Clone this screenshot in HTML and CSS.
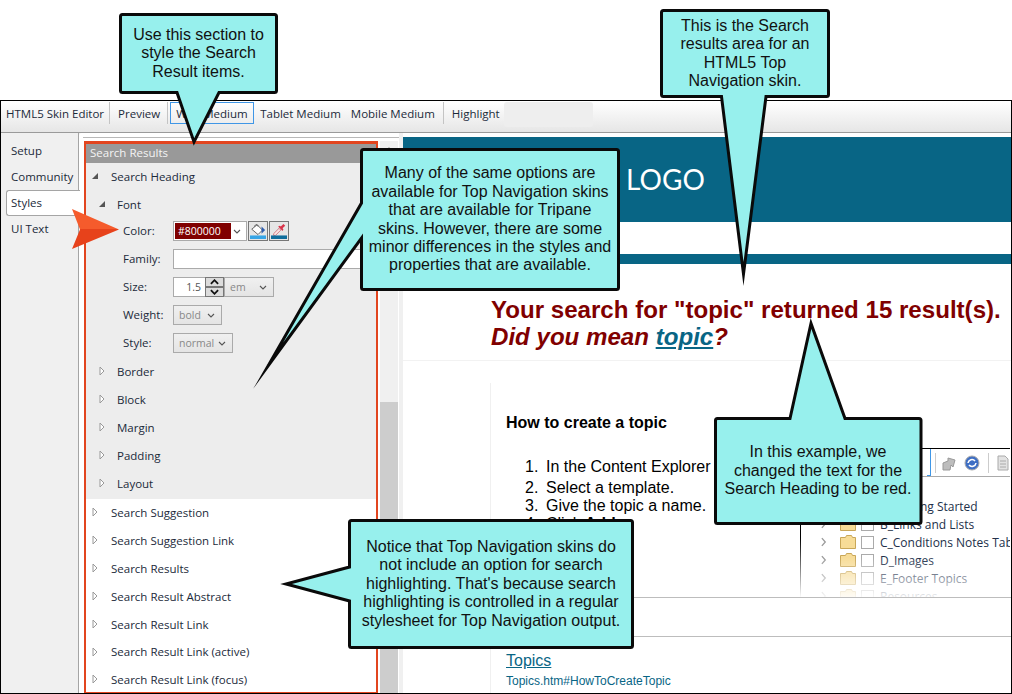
FILE: index.html
```html
<!DOCTYPE html>
<html lang="en">
<head>
<meta charset="utf-8">
<title>HTML5 Skin Editor</title>
<link rel="stylesheet" href="styles.css">
</head>
<body>
<div class="page">
  <div class="window">
    <nav class="toolbar">
      <span class="tool sep">HTML5 Skin Editor</span>
      <span class="tool sep sep-mid">Preview</span>
      <span class="tool selected">Web Medium</span>
      <span class="tool">Tablet Medium</span>
      <span class="tool sep sep-wide">Mobile Medium</span>
      <span class="tool">Highlight</span>
      <span class="tool-blank"></span>
    </nav>
    <div class="workspace">
      <aside class="tabs">
        <div class="tab">Setup</div>
        <div class="tab">Community</div>
        <div class="tab active">Styles</div>
        <div class="tab">UI Text</div>
      </aside>
      <section class="panel">
        <div class="listbox">
          <div class="redbox">
            <div class="group-title">Search Results</div>
            <div class="group-open">
              <div class="row lvl1"><svg class="tri" viewBox="0 0 8 8"><path d="M7 1v6H1z" class="tri-open"/></svg>Search Heading</div>
              <div class="row lvl2 font-row"><svg class="tri" viewBox="0 0 8 8"><path d="M7 1v6H1z" class="tri-open"/></svg>Font</div>
              <div class="row prop"><label>Color:</label>
                <div class="color-field"><span class="swatch">#800000</span><svg class="chev" viewBox="0 0 8 5"><path d="M1 1l3 3 3-3"/></svg></div>
                <span class="iconbtn"><svg viewBox="0 0 18 18"><path d="M2 7l6-5 6 6-5 5z" fill="#fff" stroke="#555"/><path d="M5 4c1-3 4-3 4 0" fill="none" stroke="#555"/><path d="M13 4l4 4-4 4z" fill="#2f5fb0"/><rect x="0" y="14" width="18" height="4" fill="#37a5e6"/></svg></span>
                <span class="iconbtn"><svg viewBox="0 0 18 18"><path d="M3 12l6-6 2 2-6 6H3z" fill="#fbe4e4" stroke="#c9707a"/><path d="M8 4l5 5 1-2-1-1 3-3-2-2-3 3-1-1z" fill="#d8344a"/><rect x="0" y="14" width="18" height="4" fill="#0f6d9c"/></svg></span>
              </div>
              <div class="row prop"><label>Family:</label><div class="text-field"></div></div>
              <div class="row prop"><label>Size:</label>
                <div class="num-field">1.5</div>
                <div class="spinner"><span class="spin"><svg viewBox="0 0 10 6"><path d="M1 5l4-4 4 4" /></svg></span><span class="spin"><svg viewBox="0 0 10 6"><path d="M1 1l4 4 4-4" /></svg></span></div>
                <div class="select sel-em">em<svg class="chev" viewBox="0 0 8 5"><path d="M1 1l3 3 3-3"/></svg></div>
              </div>
              <div class="row prop"><label>Weight:</label><div class="select sel-weight">bold<svg class="chev" viewBox="0 0 8 5"><path d="M1 1l3 3 3-3"/></svg></div></div>
              <div class="row prop"><label>Style:</label><div class="select sel-style">normal<svg class="chev" viewBox="0 0 8 5"><path d="M1 1l3 3 3-3"/></svg></div></div>
              <div class="row lvl2"><svg class="tri" viewBox="0 0 8 10"><path d="M2 1l4 4-4 4z" class="tri-closed"/></svg>Border</div>
              <div class="row lvl2"><svg class="tri" viewBox="0 0 8 10"><path d="M2 1l4 4-4 4z" class="tri-closed"/></svg>Block</div>
              <div class="row lvl2"><svg class="tri" viewBox="0 0 8 10"><path d="M2 1l4 4-4 4z" class="tri-closed"/></svg>Margin</div>
              <div class="row lvl2"><svg class="tri" viewBox="0 0 8 10"><path d="M2 1l4 4-4 4z" class="tri-closed"/></svg>Padding</div>
              <div class="row lvl2"><svg class="tri" viewBox="0 0 8 10"><path d="M2 1l4 4-4 4z" class="tri-closed"/></svg>Layout</div>
            </div>
            <div class="row lvl1"><svg class="tri" viewBox="0 0 8 10"><path d="M2 1l4 4-4 4z" class="tri-closed"/></svg>Search Suggestion</div>
            <div class="row lvl1"><svg class="tri" viewBox="0 0 8 10"><path d="M2 1l4 4-4 4z" class="tri-closed"/></svg>Search Suggestion Link</div>
            <div class="row lvl1"><svg class="tri" viewBox="0 0 8 10"><path d="M2 1l4 4-4 4z" class="tri-closed"/></svg>Search Results</div>
            <div class="row lvl1"><svg class="tri" viewBox="0 0 8 10"><path d="M2 1l4 4-4 4z" class="tri-closed"/></svg>Search Result Abstract</div>
            <div class="row lvl1"><svg class="tri" viewBox="0 0 8 10"><path d="M2 1l4 4-4 4z" class="tri-closed"/></svg>Search Result Link</div>
            <div class="row lvl1 tight"><svg class="tri" viewBox="0 0 8 10"><path d="M2 1l4 4-4 4z" class="tri-closed"/></svg>Search Result Link (active)</div>
            <div class="row lvl1"><svg class="tri" viewBox="0 0 8 10"><path d="M2 1l4 4-4 4z" class="tri-closed"/></svg>Search Result Link (focus)</div>
          </div>
          <div class="scrollbar">
            <svg class="scroll-up" viewBox="0 0 10 6"><path d="M1 5l4-4 4 4"/></svg>
            <div class="scroll-thumb"></div>
          </div>
        </div>
      </section>
      <main class="preview">
        <header class="brand"><span class="logo">LOGO</span></header>
        <div class="nav-blank"></div>
        <div class="nav-rule"></div>
        <div class="results">
          <h1 class="search-heading">Your search for "topic" returned 15 result(s).<br><em>Did you mean <a href="#">topic</a>?</em></h1>
          <div class="result">
            <h2>How to create a topic</h2>
            <ol>
              <li>In the Content Explorer</li>
              <li>Select a template.</li>
              <li>Give the topic a name.</li>
              <li>Click <b>Add</b>.</li>
            </ol>
          </div>
          <div class="result-gap"></div>
          <div class="result-link">
            <a href="#" class="result-title">Topics</a>
            <div class="result-url">Topics.htm#HowToCreateTopic</div>
          </div>
        </div>
        <div class="shot">
          <div class="shot-bar">
            <span class="shot-sel"></span>
            <span class="shot-sep"></span>
            <svg class="shot-icon" viewBox="0 0 16 16"><path d="M2 15V8l5-2V3l7 2-2 7-2-2-1 5z" fill="#bdbdbd" stroke="#999"/></svg>
            <svg class="shot-icon" viewBox="0 0 16 16"><circle cx="8" cy="8" r="7" fill="#3f6fc4" stroke="#aaa"/><path d="M4 8a4 4 0 0 1 7-2M12 8a4 4 0 0 1-7 2" fill="none" stroke="#fff" stroke-width="1.6"/></svg>
            <span class="shot-sep"></span>
            <svg class="shot-icon" viewBox="0 0 16 16"><path d="M3 1h7l3 3v11H3z" fill="#e3e3e3" stroke="#aaa"/><path d="M5 6h6M5 9h6M5 12h6" stroke="#aaa"/></svg>
          </div>
          <div class="tree">
            <div class="tree-row"><svg class="tree-chev" viewBox="0 0 7 11"><path d="M1 1l4 4.500-4 4.500"/></svg><svg class="folder" viewBox="0 0 16 14"><path d="M.5 2.500h5l1-2h5l1 2h3v11H.5z" fill="#f7dc97" stroke="#c9a758"/></svg><span class="check"></span><span>A_Getting Started</span></div>
            <div class="tree-row"><svg class="tree-chev" viewBox="0 0 7 11"><path d="M1 1l4 4.500-4 4.500"/></svg><svg class="folder" viewBox="0 0 16 14"><path d="M.5 2.500h5l1-2h5l1 2h3v11H.5z" fill="#f7dc97" stroke="#c9a758"/></svg><span class="check"></span><span>B_Links and Lists</span></div>
            <div class="tree-row"><svg class="tree-chev" viewBox="0 0 7 11"><path d="M1 1l4 4.500-4 4.500"/></svg><svg class="folder" viewBox="0 0 16 14"><path d="M.5 2.500h5l1-2h5l1 2h3v11H.5z" fill="#f7dc97" stroke="#c9a758"/></svg><span class="check"></span><span>C_Conditions Notes Tables</span></div>
            <div class="tree-row"><svg class="tree-chev" viewBox="0 0 7 11"><path d="M1 1l4 4.500-4 4.500"/></svg><svg class="folder" viewBox="0 0 16 14"><path d="M.5 2.500h5l1-2h5l1 2h3v11H.5z" fill="#f7dc97" stroke="#c9a758"/></svg><span class="check"></span><span>D_Images</span></div>
            <div class="tree-row"><svg class="tree-chev" viewBox="0 0 7 11"><path d="M1 1l4 4.500-4 4.500"/></svg><svg class="folder" viewBox="0 0 16 14"><path d="M.5 2.500h5l1-2h5l1 2h3v11H.5z" fill="#f7dc97" stroke="#c9a758"/></svg><span class="check"></span><span>E_Footer Topics</span></div>
            <div class="tree-row"><svg class="tree-chev" viewBox="0 0 7 11"><path d="M1 1l4 4.500-4 4.500"/></svg><svg class="folder" viewBox="0 0 16 14"><path d="M.5 2.500h5l1-2h5l1 2h3v11H.5z" fill="#f7dc97" stroke="#c9a758"/></svg><span class="check"></span><span>Resources</span></div>
          </div>
          <div class="shot-fade"></div>
        </div>
      </main>
    </div>
  </div>

  <svg class="shapes" viewBox="0 0 1012 694">
    <defs>
      <linearGradient id="arrowFill" x1="0" y1="0" x2="0" y2="1">
        <stop offset="0.5" stop-color="#f55b2c"/>
        <stop offset="0.5" stop-color="#e7421b"/>
      </linearGradient>
    </defs>
    <path class="arrow" d="M72 209L119 229.500L72 249L80 229.500Z"/>
    <path class="bubble" d="M122.500 14.500H274.500Q276.500 14.500 276.500 16.500V90.500Q276.500 92.500 274.500 92.500H219L194 142L177 92.500H122.500Q120.500 92.500 120.500 90.500V16.500Q120.500 14.500 122.500 14.500Z"/>
    <path class="bubble" d="M663.500 10.500H826.500Q828.500 10.500 828.500 12.500V94.500Q828.500 96.500 826.500 96.500H766L743.500 274L721.500 96.500H663.500Q661.500 96.500 661.500 94.500V12.500Q661.500 10.500 663.500 10.500Z"/>
    <path class="bubble" d="M363.500 149.500H616.500Q618.500 149.500 618.500 151.500V287.500Q618.500 289.500 616.500 289.500H363.500Q361.500 289.500 361.500 287.500V238L268 366L361.500 203V151.500Q361.500 149.500 363.500 149.500Z"/>
    <path class="bubble" d="M717.500 418.500H790L811 323.500L845 418.500H919Q921 418.500 921 420.500V521.500Q921 523.500 919 523.500H717.500Q715.500 523.500 715.500 521.500V420.500Q715.500 418.500 717.500 418.500Z"/>
    <path class="bubble" d="M351.500 520.500H630.500Q632.500 520.500 632.500 522.500V645.500Q632.500 647.500 630.500 647.500H351.500Q349.500 647.500 349.500 645.500V601L286 584L349.500 567V522.500Q349.500 520.500 351.500 520.500Z"/>
  </svg>

  <div class="note note-style">Use this section to<br>style the Search<br>Result items.</div>
  <div class="note note-area">This is the Search<br>results area for an<br>HTML5 Top<br>Navigation skin.</div>
  <div class="note note-options">Many of the same options are<br>available for Top Navigation skins<br>that are available for Tripane<br>skins. However, there are some<br>minor differences in the styles and<br>properties that are available.</div>
  <div class="note note-example">In this example, we<br>changed the text for the<br>Search Heading to be red.</div>
  <div class="note note-notice">Notice that Top Navigation skins do<br>not include an option for search<br>highlighting. That's because search<br>highlighting is controlled in a regular<br>stylesheet for Top Navigation output.</div>
</div>
</body>
</html>
```
FILE: styles.css
```css
* { box-sizing: border-box; }
html, body { margin: 0; padding: 0; background: #fff; }
.page {
  position: relative;
  width: 1012px;
  height: 694px;
  overflow: hidden;
  font-family: "Open Sans", "Noto Sans", sans-serif;
  font-size: 11.5px;
  color: #1b2a3a;
}
.window {
  display: flex;
  flex-direction: column;
  margin-top: 100px;
  height: 594px;
  border: 1px solid #000;
  background: #f0f0f0;
}
.toolbar {
  display: flex;
  align-items: flex-start;
  flex: none;
  height: 32px;
  padding: 1px 0 0 5px;
  background: linear-gradient(#ffffff, #e6e6e6);
  border-bottom: 1px solid #9a9a9a;
}
.tool {
  display: flex;
  align-items: center;
  height: 22px;
  margin-right: 10px;
  white-space: nowrap;
}
.tool.sep { padding-right: 5px; margin-right: 8px; border-right: 1px solid #c4c4c4; }
.tool.sep-mid { padding-right: 7px; }
.tool.sep-wide { padding-right: 8px; }
.tool.selected { width: 84px; margin-left: -6px; margin-right: 6px; padding-left: 5px; border: 1px solid #3f96e6; }
.tool-blank { width: 89px; height: 25px; margin-left: -6px; background: #eeeeee; border-radius: 3px; }
.workspace { display: flex; flex: 1; min-height: 0; }
.tabs {
  flex: none;
  width: 78px;
  padding-top: 5px;
  background: #f0f0f0;
  border-right: 1px solid #a5a5a5;
}
.tab { height: 26px; padding: 0 0 0 10px; line-height: 25px; font-size: 11.5px; }
.tab.active {
  position: relative;
  width: 74px;
  height: 26px;
  margin-left: 5px;
  padding-left: 4px;
  line-height: 23px;
  background: #fff;
  border: 1px solid #a5a5a5;
  border-right: 0;
  border-radius: 3px 0 0 3px;
  margin-right: -1px;
}
.panel {
  flex: none;
  width: 320px;
  padding: 4px 0 0 4px;
  background: #fff;
  border-top: 0;
  overflow: hidden;
  border-radius: 3px 0 0 0;
}
.listbox {
  display: flex;
  height: 100%;
  padding-top: 3px;
  border-top: 1px solid #b8b8b8;
  background: #fff;
}
.redbox {
  flex: none;
  width: 294px;
  height: 553px;
  margin-left: 1px;
  border: 3px solid #e2451f;
  border-width: 3px 2px 2px;
  background: #fff;
  overflow: hidden;
}
.group-title {
  height: 19px;
  padding-left: 4px;
  line-height: 18px;
  color: #f4f4f4;
  background: #999999;
}
.group-open { height: 336px; background: #ededed; }
.row { display: flex; align-items: center; height: 28px; padding-bottom: 2px; white-space: nowrap; }
.row.tight { height: 27px; }
.font-row { height: 26px; }
.prop, .row.lvl2 { padding-bottom: 0; }
.lvl1 { padding-left: 25px; }
.row.lvl2 { padding-left: 31px; }
.tri { flex: none; width: 8px; height: 10px; margin-left: -20px; margin-right: 12px; }
.lvl2 .tri { margin-left: -19px; margin-right: 11px; }
.tri-open { fill: #555; }
.tri-closed { fill: #fff; stroke: #999; }
.prop { padding-left: 37px; }
.prop label { flex: none; width: 50px; position: relative; top: -1px; }
.color-field {
  display: flex;
  align-items: center;
  width: 74px;
  height: 20px;
  padding: 1px;
  margin-right: 1px;
  background: #fff;
  border: 1px solid #aaa;
}
.swatch {
  width: 56px;
  height: 16px;
  padding-left: 3px;
  line-height: 16px;
  font-size: 10.5px;
  color: #fff;
  background: #800000;
}
.chev { flex: none; width: 8px; height: 5px; margin-left: auto; margin-right: 6px; fill: none; stroke: #555; stroke-width: 1.100; }
.color-field .chev { margin-right: 4px; }
.iconbtn {
  flex: none;
  width: 20px;
  height: 20px;
  margin-right: 1px;
  padding: 1px;
  background: #e6e6e6;
  border: 1px solid #777;
}
.iconbtn svg { display: block; width: 16px; height: 16px; }
.text-field { width: 190px; height: 20px; background: #fff; border: 1px solid #aaa; }
.num-field {
  width: 32px;
  height: 20px;
  padding-right: 4px;
  text-align: right;
  line-height: 18px;
  font-size: 10.5px;
  color: #555;
  background: #fff;
  border: 1px solid #aaa;
  border-right: 0;
}
.spinner { display: flex; flex-direction: column; width: 19px; height: 20px; }
.spin {
  display: flex;
  align-items: center;
  justify-content: center;
  height: 10px;
  background: #dcdcdc;
  border: 1px solid #777;
}
.spin svg { width: 9px; height: 6px; fill: none; stroke: #111; stroke-width: 2; }
.select {
  display: flex;
  align-items: center;
  height: 20px;
  padding-left: 5px;
  color: #888;
  font-size: 10.500px;
  background: linear-gradient(#f0f0f0, #e4e4e4);
  border: 1px solid #aaa;
}
.sel-em { width: 50px; padding-left: 5px; margin-left: 0; }
.sel-weight { width: 49px; }
.sel-style { width: 60px; }
.sel-em .chev, .sel-weight .chev, .sel-style .chev { margin-right: 6px; }
.scrollbar {
  position: relative;
  flex: none;
  width: 18px;
  margin-left: 2px;
  background: #f0f0f0;
}
.scroll-up { position: absolute; left: 5px; top: 6px; width: 8px; height: 5px; fill: none; stroke: #999; stroke-width: 1.500; }
.scroll-thumb { position: absolute; left: 0; right: 0; top: 261px; bottom: 0; background: #cdcdcd; }
.preview {
  position: relative;
  flex: 1;
  min-width: 0;
  margin-left: 4px;
  padding-top: 4px;
  background: #fff;
  overflow: hidden;
}
.brand {
  display: flex;
  align-items: center;
  height: 85px;
  padding: 0 0 2px 223px;
  background: #086585;
}
.logo { font-family: Lato, "Open Sans", sans-serif; font-size: 28px; color: #fff; letter-spacing: .1px; }
.nav-blank { height: 32px; }
.nav-rule { height: 10px; background: #086585; }
.results { font-family: "Liberation Sans", Arial, sans-serif; color: #000; }
.search-heading {
  margin: 0;
  height: 97px;
  padding: 32px 0 0 88px;
  font-size: 24.1px;
  line-height: 27px;
  font-weight: 700;
  color: #800000;
  white-space: nowrap;
  border-bottom: 1px solid #f2f2f2;
}
.search-heading a { color: #086585; }
.result {
  height: 215px;
  margin: 22px 0 0 87px;
  padding: 30px 0 0 15px;
  border-left: 1px solid #f0f0f0;
  border-bottom: 1px solid #bdbdbd;
}
.result h2 { margin: 0; font-size: 16px; line-height: 20px; font-weight: 700; }
.result ol { margin: 25px 0 0; padding-left: 19px; font-size: 16px; line-height: 18px; list-style: none; counter-reset: step; }
.result li { display: flex; counter-increment: step; }
.result li b { margin-left: .25em; }
.result li::before { content: counter(step) "."; flex: none; width: 21px; }
.result li:first-child { margin-bottom: 3px; }
.result-gap {
  height: 39px;
  margin-left: 87px;
  border-left: 1px solid #f0f0f0;
  border-bottom: 1px solid #bdbdbd;
}
.result-link { margin-left: 87px; padding: 14px 0 0 15px; height: 60px; border-left: 1px solid #f0f0f0; }
.result-title { font-size: 16px; line-height: 20px; color: #086585; }
.result-url { margin-top: 3px; font-size: 12px; line-height: 14px; color: #086585; }
.shot {
  position: absolute;
  left: 397px;
  top: 315px;
  width: 210px;
  height: 149px;
  background: #fff;
  border-top: 1px solid #000;
  border-left: 1px solid transparent;
  border-image: linear-gradient(#000 60%, #fff) 1;
  border-right: 0;
  border-bottom: 0;
  overflow: hidden;
  font-family: "Open Sans", sans-serif;
  font-size: 12px;
  color: #22304a;
}
.shot-bar {
  display: flex;
  align-items: center;
  height: 28px;
  padding-left: 126px;
  border-bottom: 1px solid #aaa;
}
.shot-sel { flex: none; width: 4px; height: 27px; margin-right: 4px; border: 1px solid #3f96e6; border-left: 0; border-top: 0; }
.shot-icon { flex: none; width: 16px; height: 16px; margin-right: 7px; }
.shot-sep { flex: none; width: 1px; height: 20px; margin: 0 5px 0 0; background: #ccc; }
.shot-icon + .shot-sep { margin: 0 6px 0 1px; }
.tree { padding-top: 20px; }
.tree-row { display: flex; align-items: center; height: 18px; padding-left: 20px; white-space: nowrap; }
.tree-chev { flex: none; width: 6px; height: 10px; margin-right: 13px; fill: none; stroke: #999; stroke-width: 1.500; }
.folder { flex: none; width: 16px; height: 14px; margin-right: 5px; }
.check { flex: none; width: 13px; height: 13px; margin-right: 6px; background: #fff; border: 1px solid #aaa; }
.shot-fade { position: absolute; left: 0; right: 0; bottom: 0; height: 40px; background: linear-gradient(rgba(255,255,255,0), rgba(255,255,255,.9)); }
.shapes { position: absolute; left: 0; top: 0; width: 1012px; height: 694px; pointer-events: none; }
.bubble { fill: #97f0ed; stroke: #0a0a0a; stroke-width: 3; stroke-linejoin: miter; stroke-miterlimit: 30; }
.arrow { fill: url(#arrowFill); }
.note {
  position: absolute;
  display: flex;
  align-items: center;
  justify-content: center;
  text-align: center;
  font-family: "Liberation Sans", Arial, sans-serif;
  font-size: 16px;
  line-height: 18.400px;
  color: #111;
  white-space: nowrap;
}
.note-style { left: 120px; top: 15px; width: 157px; height: 77px; }
.note-area { left: 661px; top: 11px; width: 168px; height: 85px; }
.note-options { left: 361px; top: 150px; width: 258px; height: 139px; }
.note-example { left: 715px; top: 419px; width: 206px; height: 104px; }
.note-notice { left: 349px; top: 521px; width: 284px; height: 126px; }
```
